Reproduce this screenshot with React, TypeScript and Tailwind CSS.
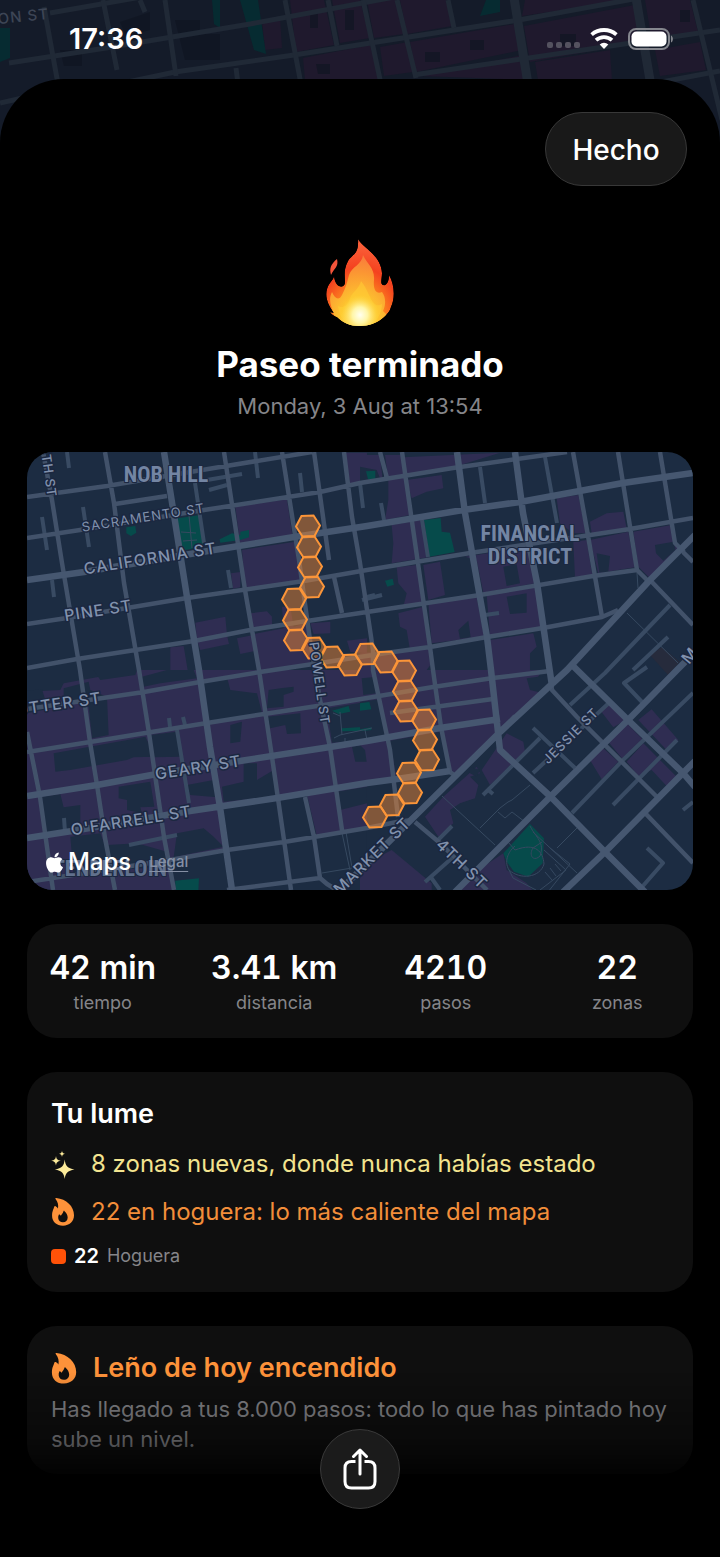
import type { ReactNode } from "react"
import { FaApple } from "react-icons/fa"

interface Tile {
  origin: string
  built: string
  open: string
  park: string
}

// Land use, one entry per map tile. Every tile is 1020 units wide.
const TILES: Tile[] = [
  {
    origin: "translate(27 450) scale(0.3333)",
    built:
      "M625 170L780 148L797 262L640 285ZM645 300L805 275L822 392L655 415ZM612 370L640 366V412L618 416ZM955 8H1020V100L970 108ZM505 518L595 500L600 555L606 582L520 600L510 570ZM430 592L470 588L482 660H430ZM670 490L720 484L735 500V530L680 540ZM630 565L680 555L690 602L640 612ZM680 552L770 535L765 470L790 470L800 530L840 520L850 640L700 662ZM850 520L910 515V550L860 552ZM960 572L1020 565V610L970 606Z",
    open: "M1000 40L1020 30V60Z",
    park: "M452 205L520 195L530 290L462 302ZM298 232L325 228L328 248L312 258L298 250ZM578 268L615 250L640 255V245L666 240V262L640 270L580 278Z",
  },
  {
    origin: "translate(360 450) scale(0.3333)",
    built:
      "M0 15H60L68 90L0 98ZM75 15H125L150 195L75 210L85 150V90ZM130 22L420 8L285 50L135 75ZM140 90L245 75L250 115L200 125L155 145ZM95 225L185 210L205 322L95 340L100 280ZM110 352L170 345L192 458L130 470L140 430L115 400ZM190 345L240 335L255 435L205 450ZM315 320L510 290L525 400L370 428L350 330ZM380 435L530 412L548 530L390 555ZM205 460L350 440L372 560L215 580ZM115 490L190 470L208 590L150 600L140 540L120 530ZM390 570L520 550L530 590L510 610V660H400ZM590 145L655 135L678 250L640 250L600 220ZM690 215L740 190L790 185L800 235L695 250ZM690 270L805 245L825 352L715 370ZM640 275L680 270L697 375L645 380ZM820 245L935 225L952 295L870 385L835 350ZM0 610L210 590L215 640L200 660H0Z",
    open: "M0 50L50 60L60 85L0 95ZM430 350L470 343L480 400L440 408ZM440 440L500 430V488L450 492ZM295 540L325 512L332 562L300 566ZM710 310L750 318L745 365L718 368ZM885 285L940 275L947 300L910 332L888 310Z",
    park: "M192 210L242 204L245 245L270 248L284 306L208 320ZM75 392L98 386L102 404L82 410ZM18 64L46 62V86L24 88Z",
  },
  {
    origin: "translate(27 670) scale(0.3333)",
    built:
      "M0 65L100 60L110 40L330 0H1020V470L870 500L840 375L585 412L600 540L430 570L440 665H0Z",
    open: "M0 62L45 58L55 90L100 110L0 130ZM200 0L330 0L325 15L220 30ZM110 55L185 35L190 60L240 80L245 195L195 205L185 110L110 90ZM345 20L420 0H500L510 25L400 40L350 50ZM80 250L355 200L385 260L320 262L300 270L130 300L85 305ZM370 195L450 185L460 260L380 262ZM530 40L600 22L610 60L690 70L705 128L545 155ZM610 165L645 155L640 215L610 220ZM725 60L760 55L800 50V65L770 75V110L720 115ZM720 140L820 130L822 190L780 192L775 165L730 175ZM585 350L650 335V280L690 280V330L740 300L748 380L590 395ZM275 350L370 335L382 410L340 412L345 430L300 420V390L275 385ZM45 380L100 372L110 412L160 405V480L50 492ZM480 345L560 330L570 382L490 375ZM130 500L220 490L262 600L140 620ZM240 525L330 520L420 545L430 590L260 600ZM450 490L530 475L560 500L590 530L440 562ZM900 115L1020 95V210L915 218ZM975 230L1010 225V275L985 275ZM930 365L1020 350V400L940 420ZM960 490L1020 475V600L975 600Z",
    park: "M445 632L516 625L514 665H445ZM915 122L965 108L970 125L935 132ZM945 175L1020 170V182L945 184ZM1000 102L1020 98V120Z",
  },
  {
    origin: "translate(360 670) scale(0.3333)",
    built:
      "M0 0H550L510 50L570 40L420 185L290 315L270 300L0 345ZM195 440L250 380L350 290L360 310L330 320L355 345L345 385L300 400L270 420L280 460L235 500ZM365 300L440 190L490 215L495 245L390 345ZM0 590L95 540L215 640V665H0ZM340 610L430 550L440 600L500 640L520 665H300ZM720 120L745 100L797 150L760 172ZM745 215L800 160L850 210L790 270ZM690 270L730 235L775 275L725 328ZM835 150L875 118L955 210L920 240ZM800 275L850 220L950 320L920 348L875 300L835 318Z",
    open: "M0 95L60 88L78 200L0 210ZM5 25L50 20V70L10 75ZM500 25L575 15L550 70L510 60ZM0 225L15 240L20 275H0ZM90 212L240 185L265 300L110 325ZM330 290L360 300L350 320L330 310Z",
    park: "M430 550L510 462L552 505L548 580L505 620L462 605L440 575ZM0 100L28 96L34 118L0 122ZM0 178L34 172V180L0 184Z",
  },
]

const AVENUES = [
  "M27 580L84 572L214 550L294 537L367 526L463 510L520 502L623 483L693 473",
  "M27 796L97 785L157 774L240 761L330 747L367 741L440 728L500 719",
  "M27 838L72 831L190 811L277 798L337 788L367 783L397 779L450 771",
  "M164 452L187 597L199 670L210 747L220 807L232 890",
  "M457 452L465 513L487 637L491 670L500 750L551 797L605 852L645 892",
  "M515 452L523 513L537 583L552 686",
  "M338 892L413 818L500 732L567 670L650 580L695 535",
  "M455 892L550 797L628 720L677 670L695 652",
  "M563 892L605 852L683 773L695 761",
  "M570 663L628 720L683 773L695 787",
]

const STREETS = [
  "M27 497L107 486L214 468L312 452",
  "M27 538L80 530L204 510L320 492L360 483L453 468L567 452",
  "M27 624L67 618L187 598L304 581L367 570L470 553L577 537L630 529L693 518",
  "M27 668L77 659L194 641L250 630L307 621L367 612L480 595L593 576L637 570L650 583",
  "M27 709L144 692L200 682L260 672L393 652L430 647L487 637L543 628L602 617L618 610",
  "M27 752L90 742L207 723L264 714L324 705L367 698L433 687L493 678L550 671",
  "M27 882L170 860L227 850L284 842L314 837L367 828L397 822L412 820",
  "M227 890L320 878L327 884L340 892",
  "M43 452L52 500L62 563L80 670L90 742L97 785L105 838L115 890",
  "M27 732L40 797L53 890",
  "M105 452L114 503L124 583L139 670L149 733L164 837L174 890",
  "M224 452L245 590L259 670L272 757L284 840L291 890",
  "M282 452L299 560L310 640L320 700L330 747L342 830",
  "M314 452L329 560M334 577L342 613",
  "M344 452L352 517L360 563L373 650L373 670L390 750L398 817",
  "M402 452L430 647L433 670L441 727L450 772L457 777",
  "M573 452L587 530L602 617M618 452L637 570M660 452L675 543L684 552",
  "M305 797L314 837L320 878M390 713L493 699M380 452L387 478",
  "M415 822L440 843L487 890M650 580L693 625M683 552L693 562",
  "M550 673L552 690L577 717L640 780L657 797M645 813L693 863",
  "M500 732L515 716M115 504L167 496",
]

const ALLEYS = [
  "M67 452L69 468M42 517L47 550M83 507L89 547M52 580L54 597M195 483L204 543",
  "M209 490L227 485M207 480L242 474M228 570L231 588M255 452L258 478M300 473L302 492M360 483L363 508M362 600L382 595",
  "M169 718L170 727M183 717L185 725M177 730L189 803M64 818L65 832M129 845L177 835M381 503L384 520",
  "M480 467L485 503M545 457L557 523M422 520L428 557M485 615L499 613M367 597L375 595",
  "M533 728L575 768M483 795L540 738M487 789L493 794M533 773L610 702M570 705L605 673L670 605M633 670L668 637",
  "M572 813L623 760L693 693M613 805L677 740M642 702L624 683L647 667M647 848L663 863L642 887M683 810L693 802",
  "M425 882L452 858M430 876L440 890M438 840L452 826",
]

const PATHS = [
  "M442 796L495 845M480 828L500 808L508 802L512 800L530 785M498 812L505 818L512 812L525 822M557 848L577 828M627 613L678 663M637 573L638 588",
  "M189 515L192 548M181 532L196 533M183 541L197 540M334 738L340 735L372 728M340 712L342 735M333 713L340 716M345 738V744M365 730L367 740",
  "M342 833L350 870M346 832L352 868L322 873M508 842L515 850C536 842 543 852 544 864C540 878 520 880 509 870C503 860 510 850 515 846M530 826C536 838 545 842 540 856C534 862 528 856 533 848L542 842M533 832L577 873M544 850L566 870L540 890M550 848L570 864L548 892M509 870L513 878L536 890M545 872L552 880M550 868L556 876M555 864L561 871",
]

// Centre of each walked zone, from start to end
const ZONES = [
  [308, 526], [309, 547], [310, 567], [312, 587], [294, 599], [295, 620],
  [296, 640], [314, 648], [332, 657], [350, 665], [367, 654], [386, 662],
  [404, 671], [405, 691], [406, 711], [424, 720], [425, 740], [427, 760],
  [409, 773], [410, 793], [392, 805], [375, 817],
]

const STREET_LABELS = [
  { text: "SACRAMENTO ST", x: 144, y: 522, angle: -9, size: 13, weight: 400 },
  { text: "CALIFORNIA ST", x: 151, y: 564, angle: -9, size: 16, weight: 500 },
  { text: "PINE ST", x: 99, y: 616, angle: -9, size: 16, weight: 500 },
  { text: "SUTTER ST", x: 54, y: 710, angle: -8, size: 16, weight: 500 },
  { text: "GEARY ST", x: 199, y: 773, angle: -9, size: 16, weight: 500 },
  { text: "O'FARRELL ST", x: 132, y: 826, angle: -9, size: 16, weight: 500 },
  { text: "POWELL ST", x: 315, y: 684, angle: 82, size: 13, weight: 500 },
  { text: "MARKET ST", x: 376, y: 860, angle: -45, size: 16, weight: 500 },
  { text: "4TH ST", x: 458, y: 868, angle: 44, size: 16, weight: 500 },
  { text: "JESSIE ST", x: 574, y: 739, angle: -45, size: 13, weight: 500 },
  { text: "5TH ST", x: 44, y: 472, angle: 82, size: 13, weight: 500 },
  { text: "M", x: 694, y: 659, angle: -50, size: 16, weight: 500 },
]

const STATS = [
  { value: "42 min", label: "tiempo" },
  { value: "3.41 km", label: "distancia" },
  { value: "4210", label: "pasos" },
  { value: "22", label: "zonas" },
]

function BackdropMap() {
  return (
    <svg
      viewBox="0 0 720 180"
      preserveAspectRatio="xMidYMin slice"
      className="absolute inset-x-0 top-0 h-[180px] w-full"
      aria-hidden="true"
    >
      <rect width="720" height="180" fill="#141b29" />
      <path
        d="M290 0H324L334 45L296 52ZM332 0H360L370 38L340 43ZM367 0H396L404 34L374 38ZM400 0H446L452 26L407 34ZM303 58L370 45L380 80H305ZM410 42L515 24L522 50L416 72ZM380 47L408 42L413 72L384 76ZM420 76L522 55L527 80ZM525 0H632L522 16ZM524 26L640 4L643 42L530 62ZM535 62L610 50L612 80H538ZM645 0H690L698 32L652 42ZM655 50L700 42L706 70L660 76ZM262 20L280 16L282 48L265 50Z"
        fill="#1f192d"
      />
      <path d="M240 0H258L266 54L254 50ZM212 0H220V28L214 24ZM486 0H500V12L480 16ZM0 28H10V58L0 62Z" fill="#062b31" />
      <path d="M175 20H200V34H220V60H185ZM60 50H82V66H64ZM120 22L150 12V30L126 36ZM425 52H440V62H425ZM470 40H484V50H470ZM560 34H576V46H560ZM310 10H318V28H310ZM345 10H354V30H345ZM316 64H330V74H318ZM680 10H690V22H680Z" fill="#0e1420" opacity="0.6" />
      <g fill="none" stroke="#202936" strokeWidth="5">
        <path d="M50 13L147 -4M9 63L106 48L250 24L400 -4M90 90L175 72L294 55L409 37L519 20L650 -4M413 75L720 30M640 86L720 71M0 103L40 94" />
        <path d="M44 7L58 84M103 0L117 70M140 0L145 12M165 0L176 76M285 0L301 84M328 0L337 46M363 0L381 84M397 0L416 78M448 0L454 28M693 0L722 120M236 68L238 84" />
        <path d="M514 -2L528 84M636 -2L651 86" strokeWidth="9" />
      </g>
      <text x="-12" y="24" transform="rotate(-6 0 24)" fontSize="15" fontWeight="500" fill="#3d4555" letterSpacing="1">
        TON ST
      </text>
    </svg>
  )
}

function StatusBar() {
  return (
    <div className="relative flex h-[79px] items-center justify-between pt-1 pr-[46px] pb-1.5 pl-[69px]">
      <time className="text-[29px] leading-none font-semibold">17:36</time>
      <div className="flex items-center gap-2.5">
        <div className="flex items-center gap-[3px] pt-3">
          {[0, 1, 2, 3].map((dot) => (
            <span key={dot} className="size-1.5 rounded-xs bg-[#54525f]" />
          ))}
        </div>
        <svg viewBox="0 0 28 21" className="h-[21px] w-7" aria-label="Wi-Fi">
          <g fill="none" stroke="#fff" strokeWidth="3.800">
            <path d="M1.600 6.600A19 19 0 0 1 26.400 6.600" />
            <path d="M6 12.100A12 12 0 0 1 22 12.100" />
          </g>
          <path d="M14 21L9.700 16.400A6.500 6.500 0 0 1 18.300 16.400Z" fill="#fff" />
        </svg>
        <svg viewBox="0 0 46 22" className="h-[22px] w-[46px]" aria-label="Batería">
          <rect x="1" y="1" width="40" height="20" rx="7" fill="none" stroke="#85878e" strokeWidth="2" />
          <rect x="3.500" y="3.500" width="35" height="15" rx="5" fill="#fff" />
          <path d="M43 7.500C45.500 8.500 45.500 13.500 43 14.500Z" fill="#85878e" />
        </svg>
      </div>
    </div>
  )
}

const FIRE_OUTLINE =
  "M33 1C38 10 56 17 57 35C57 41 55 46 58 47C62 48 64 43 64 37C70 47 70 61 66 69C65 73 63 75 61 77L59 79C53 85 44 88 34 88C25 88 18 85 12 79C9 78 7 77 5 74L9 75C2 66 0 58 2 51C4 44 8 43 9 38C10 46 14 50 18 48C23 45 16 36 23 23C27 16 34 17 33 1Z"

function FireEmoji() {
  return (
    <svg viewBox="0 0 70 90" className="h-[90px] w-[70px]" role="img" aria-label="Fuego">
      <defs>
        <radialGradient id="outer" cx="0.5" cy="0.94" r="0.85">
          <stop offset="0" stopColor="#ffd83a" />
          <stop offset="0.4" stopColor="#fd8a1e" />
          <stop offset="0.72" stopColor="#f4421f" />
          <stop offset="1" stopColor="#fa5d37" />
        </radialGradient>
        <radialGradient id="middle" cx="0.5" cy="0.95" r="0.95">
          <stop offset="0" stopColor="#fff3a0" />
          <stop offset="0.35" stopColor="#fdc62f" />
          <stop offset="0.75" stopColor="#fb9633" />
          <stop offset="1" stopColor="#f97a3c" />
        </radialGradient>
        <radialGradient id="core" cx="0.5" cy="0.5" r="0.5">
          <stop offset="0" stopColor="#fffff0" />
          <stop offset="0.4" stopColor="#fff6a8" />
          <stop offset="1" stopColor="#ffd640" stopOpacity="0" />
        </radialGradient>
        <clipPath id="fire">
          <path d={FIRE_OUTLINE} />
        </clipPath>
      </defs>
      <path d="M12 21C14 29 9 30 6 37C4 30 6 26 12 21Z" fill="#f4543a" />
      <g clipPath="url(#fire)">
        <path d={FIRE_OUTLINE} fill="url(#outer)" />
        <path
          d="M38 17C42 26 50 30 49 42C48 51 51 57 57 54C61 59 61 67 58 73L62 77C54 84 45 89 34 89C23 88 14 83 9 77C6 67 3 62 7 54C10 61 14 63 17 57C21 49 22 45 24 37C27 28 37 27 38 17Z"
          fill="url(#middle)"
        />
        <path
          d="M36 43C41 49 43 55 47 63C50 68 53 68 57 66C57 75 52 84 44 88C37 90 29 89 24 87C17 83 14 76 13 68C19 71 23 67 25 60C28 53 34 51 36 43Z"
          fill="#ffd136"
          opacity="0.5"
        />
        <ellipse cx="35" cy="77" rx="19" ry="20" fill="url(#core)" />
      </g>
    </svg>
  )
}

function FlameIcon({ className }: { className: string }) {
  return (
    <svg viewBox="0 0 24 30" className={className} fill="#fd923a" aria-hidden="true">
      <path
        fillRule="evenodd"
        d="M4 1C3.600 0.400 4 0 4.800 0.100C15.500 1.200 23.800 9 23.800 18.500C23.800 25 19 29.600 12 29.600C5 29.600 0.300 25.400 0.300 19C0.300 14 2 12 2.600 9.500C2.800 8.700 3.300 8.500 4 8.800C5.200 9.400 6 10.200 6.600 11.200C7.300 7.500 6.500 4 4 1ZM13.600 14.200C13.400 13.700 12.700 13.500 12.500 14.200C11.800 16.500 10.600 17.500 9.700 19L8.400 17.800C8 17.500 7.700 17.600 7.500 18C6.900 19.300 6.700 20.500 6.900 21.800C7.200 24.500 9.200 26 11.900 26C15 26 17 23.900 17 20.900C17 18.200 15.500 15.800 13.600 14.200Z"
      />
    </svg>
  )
}

function SparklesIcon() {
  return (
    <svg viewBox="0 0 24 29" className="h-[29px] w-6" fill="#fcea9a" aria-hidden="true">
      <path d="M13.700 9.500C14.500 16 16.500 18.300 23.500 19.500C16.500 20.700 14.500 23 13.700 29C12.900 23 10.900 20.700 3.900 19.500C10.900 18.300 12.900 16 13.700 9.500Z" />
      <path d="M5 6C5.400 9 6.400 10.200 9.800 10.800C6.400 11.400 5.400 12.500 5 15.600C4.600 12.500 3.600 11.400 0.200 10.800C3.600 10.200 4.600 9 5 6Z" />
      <path d="M11 0.500C11.200 2.700 11.900 3.400 14 3.800C11.900 4.200 11.200 4.900 11 7.100C10.800 4.900 10.100 4.200 8 3.800C10.100 3.400 10.800 2.700 11 0.500Z" />
    </svg>
  )
}

function RouteMap() {
  return (
    <div className="relative overflow-hidden rounded-[26px]">
      <svg viewBox="27 452 666 438" className="block h-auto w-full" role="img" aria-label="Mapa del paseo">
        <rect x="27" y="452" width="666" height="438" fill="#1c2c42" />
        {TILES.map((tile) => (
          <g key={tile.origin} transform={tile.origin}>
            <path d={tile.built} fill="#2f2d52" />
            <path d={tile.open} fill="#1c2c42" />
            <path d={tile.park} fill="#064b4b" />
          </g>
        ))}
        <path d="M650 655L662 647L680 662L668 675Z" fill="#262b3c" />
        <g fill="none" stroke="#42526a" strokeLinejoin="round">
          <path d={PATHS.join("")} strokeWidth="1" stroke="#364960" />
          <path d={ALLEYS.join("")} strokeWidth="4" stroke="#394b63" />
          <path d={STREETS.join("")} strokeWidth="4.500" />
          <path d={AVENUES.join("")} strokeWidth="6.500" stroke="#465770" />
        </g>
        {ZONES.map(([x, y]) => (
          <path
            key={`${x}-${y}`}
            d="M-12 0.500L-6.500 -10L5.500 -10.500L12 -0.500L6.500 10L-5.500 10.500Z"
            transform={`translate(${x} ${y})`}
            fill="#f98c32"
            fillOpacity="0.460"
            stroke="#fb9539"
            strokeWidth="2"
          />
        ))}
        <g fill="#8191ac" stroke="#1b2740" strokeWidth="3" paintOrder="stroke" textAnchor="middle" strokeLinejoin="round">
          {STREET_LABELS.map(({ text, x, y, angle, size, weight }) => (
            <text
              key={text}
              transform={`translate(${x} ${y}) rotate(${angle})`}
              fontSize={size}
              fontWeight={weight}
              letterSpacing="1"
            >
              {text}
            </text>
          ))}
          <g
            fontSize="22"
            fontWeight="700"
            fontFamily="'Liberation Sans Narrow', 'Roboto Condensed', 'Open Sans Condensed', Roboto, sans-serif"
            fill="#7385a3"
            strokeWidth="2"
          >
            <text x="166" y="482">NOB HILL</text>
            <text x="530" y="541">FINANCIAL</text>
            <text x="530" y="564">DISTRICT</text>
            <text x="110" y="876" fill="#61718d">TENDERLOIN</text>
          </g>
        </g>
      </svg>
      <div className="absolute bottom-2.5 left-4 flex items-center gap-0.5">
        <FaApple className="size-[23px]" aria-hidden="true" />
        <span className="text-[24px] leading-9 font-medium">Maps</span>
        <a href="#legal" className="ml-4 text-[15px] leading-5 font-medium text-[#8590a5] underline underline-offset-4">
          Legal
        </a>
      </div>
    </div>
  )
}

function Card({ children }: { children: ReactNode }) {
  return <section className="rounded-[30px] bg-[#0f0f0f] px-6">{children}</section>
}

export default function App() {
  return (
    <div className="relative flex min-h-screen flex-col overflow-hidden bg-black font-['Inter','Noto_Sans',sans-serif] text-white">
      <BackdropMap />
      <StatusBar />

      <main className="relative grow rounded-t-[64px] bg-black px-[27px] pb-[82px]">
        <div className="flex justify-end pt-[33px] pr-1.5">
          <button
            type="button"
            className="h-[74px] w-[142px] rounded-full border border-[#383838] bg-[#191919] pt-0.5 text-[28px] font-medium"
          >
            Hecho
          </button>
        </div>

        <header className="flex flex-col items-center pt-[52px]">
          <FireEmoji />
          <h1 className="mt-4 text-[35px] leading-[40px] font-bold">Paseo terminado</h1>
          <p className="mt-1.5 text-[22px] leading-8 text-[#858589]">Monday, 3 Aug at 13:54</p>
        </header>

        <div className="mt-[30px] flex flex-col gap-[34px]">
          <RouteMap />

          <Card>
            <dl className="grid h-[114px] grid-cols-4 content-center gap-x-[68px] pt-0.5">
              {STATS.map(({ value, label }) => (
                <div key={label} className="flex flex-col-reverse items-center whitespace-nowrap">
                  <dt className="text-[18px] leading-7 text-[#858589]">{label}</dt>
                  <dd className="text-[32px] leading-[42px] font-semibold tabular-nums">{value}</dd>
                </div>
              ))}
            </dl>
          </Card>

          <Card>
            <div className="pt-[26px] pb-5">
              <h2 className="text-[27px] leading-8 font-semibold">Tu lume</h2>
              <p className="mt-4 flex items-center gap-4 text-[24px] leading-9 text-[#f3e48f]">
                <SparklesIcon />
                8 zonas nuevas, donde nunca habías estado
              </p>
              <p className="mt-3 flex items-center gap-4 text-[24px] leading-9 text-[#f28e3a]">
                <FlameIcon className="h-7 w-6" />
                22 en hoguera: lo más caliente del mapa
              </p>
              <p className="mt-2.5 flex items-center gap-2 text-[18px] leading-8 text-[#858589]">
                <span className="size-[15px] rounded-sm bg-[#ff5208]" />
                <strong className="text-[20px] font-semibold text-white">22</strong>
                Hoguera
              </p>
            </div>
          </Card>

          <Card>
            <div className="pt-6 pb-5">
              <h2 className="flex items-center gap-4 text-[27px] leading-9 font-semibold text-[#fd923a]">
                <FlameIcon className="h-[31px] w-[26px]" />
                Leño de hoy encendido
              </h2>
              <p className="mt-2 text-[22px] leading-[30px] text-[#858589]">
                Has llegado a tus 8.000 pasos: todo lo que has pintado hoy sube un nivel.
              </p>
            </div>
          </Card>
        </div>
      </main>

      <footer className="pointer-events-none fixed inset-x-0 bottom-0 flex h-[231px] items-end justify-center bg-linear-to-b from-transparent from-20% via-black/35 via-50% to-black to-70% pb-12">
        <button
          type="button"
          aria-label="Compartir"
          className="pointer-events-auto flex size-20 items-center justify-center rounded-full border border-[#3a3a3a] bg-[#1b1b1b]"
        >
          <svg viewBox="0 0 34 42" className="h-[42px] w-[34px]" fill="none" stroke="#fff" strokeWidth="3" strokeLinecap="round" strokeLinejoin="round">
            <path d="M12.500 13.500H8.500Q2 13.500 2 20V33.500Q2 40 8.500 40H25.500Q32 40 32 33.500V20Q32 13.500 25.500 13.500H21.500" strokeLinecap="butt" />
            <path d="M17 26V2.500M10.500 8.500L17 2L23.500 8.500" />
          </svg>
        </button>
      </footer>
    </div>
  )
}
